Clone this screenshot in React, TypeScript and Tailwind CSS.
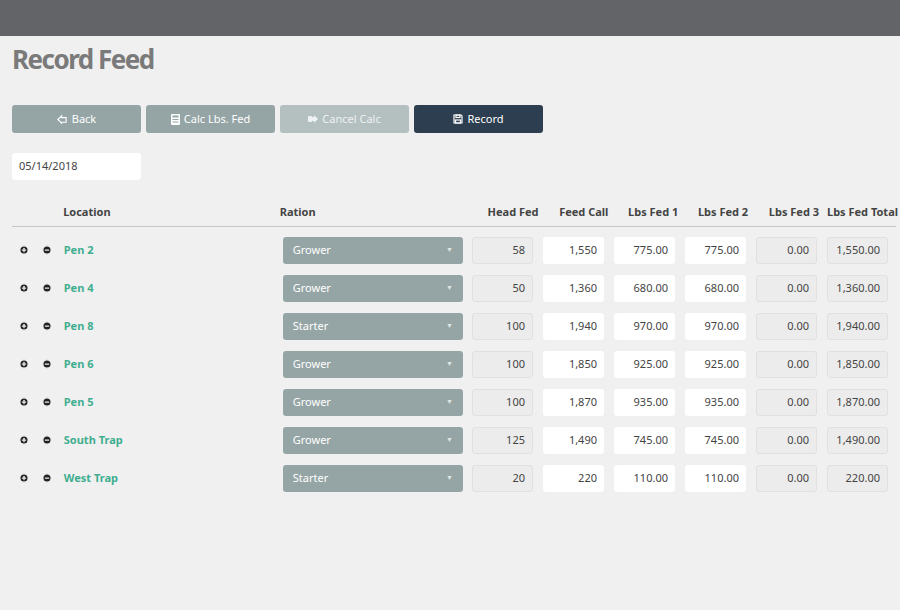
import { CirclePlus, CircleMinus } from 'lucide-react';

const rows = [
  { loc: 'Pen 2', ration: 'Grower', head: '58', call: '1,550', f1: '775.00', f2: '775.00', f3: '0.00', total: '1,550.00' },
  { loc: 'Pen 4', ration: 'Grower', head: '50', call: '1,360', f1: '680.00', f2: '680.00', f3: '0.00', total: '1,360.00' },
  { loc: 'Pen 8', ration: 'Starter', head: '100', call: '1,940', f1: '970.00', f2: '970.00', f3: '0.00', total: '1,940.00' },
  { loc: 'Pen 6', ration: 'Grower', head: '100', call: '1,850', f1: '925.00', f2: '925.00', f3: '0.00', total: '1,850.00' },
  { loc: 'Pen 5', ration: 'Grower', head: '100', call: '1,870', f1: '935.00', f2: '935.00', f3: '0.00', total: '1,870.00' },
  { loc: 'South Trap', ration: 'Grower', head: '125', call: '1,490', f1: '745.00', f2: '745.00', f3: '0.00', total: '1,490.00' },
  { loc: 'West Trap', ration: 'Starter', head: '20', call: '220', f1: '110.00', f2: '110.00', f3: '0.00', total: '220.00' },
];

function Box({ value, readOnly }: { value: string; readOnly?: boolean }) {
  return (
    <div
      className={
        'w-[61px] h-[27px] rounded-[3px] flex items-center justify-end pr-[7px] text-[11px] text-[#444] ' +
        (readOnly ? 'bg-[#ececec] border border-[#e0e0e0]' : 'bg-white')
      }
    >
      {value}
    </div>
  );
}

export default function App() {
  return (
    <div className="w-[900px] h-[610px] bg-[#f0f0f0] font-['Lato',sans-serif] overflow-hidden">
      <div className="h-[36px] bg-[#636468]" />
      <div className="px-[12px]">
        <h1 className="mt-[7px] text-[26px] font-bold text-[#7a7a7a] tracking-[-1.5px] leading-[32px]">Record Feed</h1>

        {/* Toolbar */}
        <div className="mt-[30px] flex gap-[5px]">
          <button className="w-[129px] h-[28px] rounded-[3px] bg-[#95a5a6] text-white text-[11px] flex items-center justify-center gap-1">
            <svg width="11" height="11" viewBox="0 0 12 12" fill="none" stroke="white" strokeWidth="1.2"><path d="M1 6 L5 2 L5 4 L10 4 L10 9 L5 9 L5 10 Z" /></svg>
            Back
          </button>
          <button className="w-[129px] h-[28px] rounded-[3px] bg-[#95a5a6] text-white text-[11px] flex items-center justify-center gap-1">
            <svg width="9" height="11" viewBox="0 0 9 11" fill="white"><rect x="0" y="0" width="9" height="11" rx="1" /><rect x="1.5" y="1.5" width="6" height="2" fill="#95a5a6" /><rect x="1.5" y="5" width="6" height="1" fill="#95a5a6" /><rect x="1.5" y="7.5" width="6" height="1" fill="#95a5a6" /></svg>
            Calc Lbs. Fed
          </button>
          <button className="w-[129px] h-[28px] rounded-[3px] bg-[#b4bfc0] text-[#eef2f2] text-[11px] flex items-center justify-center gap-1">
            <svg width="10" height="10" viewBox="0 0 10 10" fill="#eef2f2"><rect x="0" y="2" width="4" height="6" rx="1" /><path d="M4 3 H6 V1 L10 5 L6 9 V7 H4 Z" /></svg>
            Cancel Calc
          </button>
          <button className="w-[129px] h-[28px] rounded-[3px] bg-[#2c3e50] text-white text-[11px] flex items-center justify-center gap-1">
            <svg width="10" height="10" viewBox="0 0 10 10" fill="none" stroke="white" strokeWidth="1.2"><path d="M1 1 H8 L9 2 V9 H1 Z" /><rect x="3" y="1" width="4" height="2.5" /><rect x="2.5" y="6" width="5" height="3" /></svg>
            Record
          </button>
        </div>

        <div className="mt-[20px] w-[129px] h-[27px] bg-white rounded-[3px] flex items-center pl-[7px] text-[11px] text-[#444]">05/14/2018</div>

        {/* Table header */}
        <div className="mt-[24px] flex items-center h-[16px] text-[11px] font-bold text-[#444]">
          <div className="w-[52px]" />
          <div className="w-[220px]">Location</div>
          <div className="w-[190px]">Ration</div>
          <div className="w-[73px] text-right">Head Fed</div>
          <div className="w-[71px] text-right">Feed Call</div>
          <div className="w-[71px] text-right">Lbs Fed 1</div>
          <div className="w-[71px] text-right">Lbs Fed 2</div>
          <div className="w-[72px] text-right">Lbs Fed 3</div>
          <div className="w-[61px] ml-[8px] whitespace-nowrap">Lbs Fed Total</div>
        </div>
        <div className="mt-[6px] h-[1px] bg-[#c6c6c6] w-[884px]" />

        <div className="mt-[4px]">
          {rows.map((r) => (
            <div key={r.loc} className="h-[38px] flex items-center">
              <div className="w-[52px] flex items-center gap-[13px] pl-[7px]">
                <CirclePlus className="w-[10px] h-[10px] fill-[#222] text-[#f0f0f0]" strokeWidth={3} />
                <CircleMinus className="w-[10px] h-[10px] fill-[#222] text-[#f0f0f0]" strokeWidth={3} />
              </div>
              <div className="w-[220px] text-[11px] font-bold text-[#3fae8f]">{r.loc}</div>
              <div className="w-[181px] h-[27px] rounded-[3px] bg-[#95a5a6] flex items-center justify-between px-[10px] text-[11px] text-white">
                {r.ration}
                <span className="text-[7px] text-[#dfe5e5]">▼</span>
              </div>
              <div className="ml-[9px] flex gap-[10px]">
                <Box value={r.head} readOnly />
                <Box value={r.call} />
                <Box value={r.f1} />
                <Box value={r.f2} />
                <Box value={r.f3} readOnly />
                <Box value={r.total} readOnly />
              </div>
            </div>
          ))}
        </div>
      </div>
    </div>
  );
}
